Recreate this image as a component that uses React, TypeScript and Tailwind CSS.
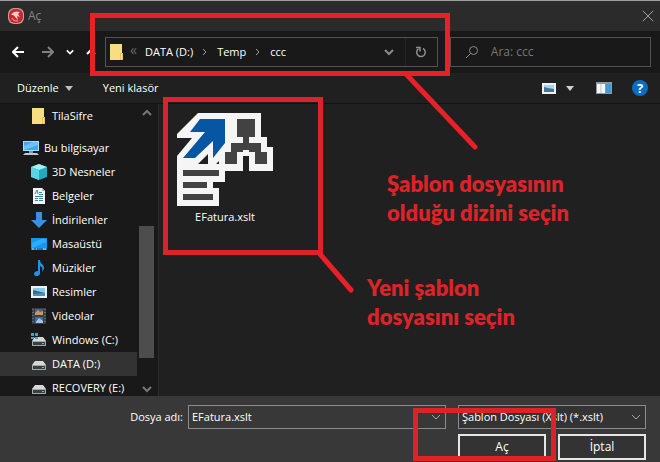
import type { ReactNode } from "react";

function Folder() {
  return (
    <svg width="16" height="18" viewBox="0 0 16 18" aria-hidden="true">
      <path d="M1 1h12v9h1v7H1z" fill="#f9dd82" />
      <path d="M11 10h3v7h-3z" fill="#e8c25c" />
      <path d="M12 11h1v5h-1z" fill="#fbe9ab" />
    </svg>
  );
}
function Pc() {
  return (
    <svg width="18" height="16" viewBox="0 0 18 16" aria-hidden="true">
      <path d="M1 1h16v10H1z" fill="#a9dcfa" />
      <path d="M2 2h14v8H2z" fill="#42a8ec" />
      <path d="M2 10V6l9-4h5v3z" fill="#6cc2f6" />
      <path d="M7 11h4v2H7z" fill="#7f9cae" />
      <path d="M3 13h12l2 2H1z" fill="#b9cbd6" />
    </svg>
  );
}
function Cube() {
  return (
    <svg width="16" height="16" viewBox="0 0 16 16" aria-hidden="true">
      <path d="M8 0l8 3v10l-8 3-8-3V3z" fill="#24a9c0" />
      <path d="M8 0l8 3-8 3-8-3z" fill="#a9edf5" />
      <path d="M0 3l8 3v10l-8-3z" fill="#5bd3e3" />
    </svg>
  );
}
function Doc() {
  return (
    <svg width="16" height="16" viewBox="0 0 16 16" aria-hidden="true">
      <path d="M2 0h9l3 3v13H2z" fill="#f1f4f6" />
      <path d="M11 0v3h3z" fill="#a8b6bf" />
      <path d="M4 6l2-4 1 4M8 4.500h3M8 6.500h4M4 8.500h8M4 10.500h3M4 12.500h3M8 10.500h4M8 12.500h4" stroke="#3c84a8" fill="none" />
    </svg>
  );
}
function Down() {
  return (
    <svg width="16" height="16" viewBox="0 0 16 16" aria-hidden="true">
      <path d="M5 0h6v8h5l-8 8-8-8h5z" fill="#3a8fe0" />
    </svg>
  );
}
function Desk() {
  return (
    <svg width="16" height="14" viewBox="0 0 16 14" aria-hidden="true">
      <path d="M0 1h16v12H0z" fill="#1397ee" />
      <path d="M1 11V6l9-4h5v3z" fill="#2badfa" />
      <path d="M0 11h16v2H0z" fill="#1279c6" />
      <path d="M1 12h2M5 12h1M12 12h3" stroke="#bfe5fc" />
    </svg>
  );
}
function Note() {
  return (
    <svg width="16" height="16" viewBox="0 0 16 16" aria-hidden="true">
      <path d="M7 0h2c0 4 4 4 4 8 0 1-1 3-2 4 1-4 0-5-2-6v7c0 4-6 4-6 1 0-2 2-3 4-3z" fill="#1e93e8" />
    </svg>
  );
}
function Pic() {
  return (
    <svg width="16" height="12" viewBox="0 0 16 12" aria-hidden="true">
      <path d="M0 0h16v12H0z" fill="#eef2f4" />
      <path d="M2 2h12v8H2z" fill="#8cc8e8" />
      <path d="M2 4l4 1 8 2v3H2z" fill="#2f6d87" />
      <path d="M2 8l12-1v3H2z" fill="#4b92b8" />
    </svg>
  );
}
function Film() {
  return (
    <svg width="14" height="16" viewBox="0 0 14 16" aria-hidden="true">
      <path d="M0 0h14v16H0z" fill="#3a3e43" />
      <path d="M3 1h8v6H3z" fill="#4a5e9a" />
      <path d="M3 9h8v6H3z" fill="#2e6fc0" />
      <path d="M3 5l3-3 2 2 3-1v4H3z" fill="#c79a5a" />
      <path d="M4 14l3-4 4 3v2H4z" fill="#a9c3df" />
      <path d="M1 1v15M13 1v15" stroke="#8f959b" strokeDasharray="1 2" />
    </svg>
  );
}
function Drive({ win = false }: { win?: boolean }) {
  return (
    <svg width="16" height="14" viewBox="0 0 16 14" aria-hidden="true">
      <path d="M4 4h8l3 4H1z" fill="#d5d8da" />
      <path d="M1 8h14v5H1z" fill="#a3a7aa" />
      <path d="M2 9h12v3H2z" fill="#3b3f41" />
      <path d="M11 10h2v1h-2z" fill="#46e07a" />
      {win && <path d="M0 0h3v3H0zM4 0h3v3H4zM0 4h3v2H0zM4 4h3v2H4z" fill="#29a9e8" />}
    </svg>
  );
}

const chevronPaths = { up: "M1 7l4-4 4 4", down: "M1 3l4 4 4-4", right: "M3 2l3 3-3 3" };

function Chevron({ d, className = "", w = 2 }: { d: "up" | "down" | "right"; className?: string; w?: number }) {
  return (
    <svg width="10" height="10" viewBox="0 0 10 10" className={className} aria-hidden="true">
      <path d={chevronPaths[d]} fill="none" stroke="currentColor" strokeWidth={w} />
    </svg>
  );
}

function XsltIcon() {
  return (
    <svg width="97" height="94" viewBox="0 0 97 94" aria-hidden="true">
      <path d="M21 0H84V24H90V34H96V58H72V43H66V58H48V69H36V75H42V93H0V43L15 25H0V21z" fill="#f5f5f5" />
      <path d="M23 6h25v24L36 45V28L18 45H6l22-26H13z" fill="#0756a3" />
      <path d="M31 41v10H21zM42 48v3h-3z" fill="#202020" />
      <path d="M60 6h18v18h-6v6h12v9h6v12H78V39h-6v-2h-6v2h-6v12H48V39h6v-9h12v-6h-6z" fill="#424242" />
      <path d="M6 57h36v6H6zM6 69h24v6H6zM6 81h30v6H6z" fill="#424242" />
    </svg>
  );
}

const places: { name: string; icon: ReactNode; selected?: boolean }[] = [
  { name: "3D Nesneler", icon: <Cube /> },
  { name: "Belgeler", icon: <Doc /> },
  { name: "İndirilenler", icon: <Down /> },
  { name: "Masaüstü", icon: <Desk /> },
  { name: "Müzikler", icon: <Note /> },
  { name: "Resimler", icon: <Pic /> },
  { name: "Videolar", icon: <Film /> },
  { name: "Windows (C:)", icon: <Drive win /> },
  { name: "DATA (D:)", icon: <Drive />, selected: true },
  { name: "RECOVERY (E:)", icon: <Drive /> },
];

function Place({ name, icon, selected }: { name: string; icon: ReactNode; selected?: boolean }) {
  return (
    <button className={`flex h-6 w-full shrink-0 items-center gap-1 pl-[30px] text-left whitespace-nowrap ${selected ? "bg-[#333333]" : ""}`}>
      <span className="flex w-[18px] justify-center">{icon}</span>
      {name}
    </button>
  );
}

export default function App() {
  return (
    <div className="relative flex min-h-screen flex-col overflow-hidden border-t border-[#9a9e9c] bg-[#202020] font-['Open_Sans','Noto_Sans',sans-serif] text-[11px] leading-4 text-white">
      <header className="flex h-[30px] items-center bg-[#2b2b2b] pr-1.5 pl-2">
        <svg width="16" height="16" viewBox="0 0 16 16" aria-hidden="true">
          <rect width="16" height="16" rx="6" fill="#c79a9a" />
          <rect x="1" y="1" width="14" height="14" rx="6" fill="#c8252d" />
          <path d="M3 7c2-4 6-4 9-3l-2 2 2 3-3-1 1 4-3-3c-1-2-2-2-4-2z" fill="#f0c9c9" />
          <path d="M4 10c1 3 4 3 6 3" stroke="#f0b5b5" fill="none" />
        </svg>
        <h1 className="ml-1 flex-1 text-[12px] text-[#858585]">Aç</h1>
        <button aria-label="Kapat" className="text-[#a0a0a0]">
          <svg width="12" height="12" viewBox="0 0 12 12"><path d="M1 1l10 10M11 1L1 11" stroke="currentColor" /></svg>
        </button>
      </header>

      <nav className="flex h-[42px] items-center bg-[#191919] pr-[9px] pl-3">
        <button aria-label="Geri">
          <svg width="12" height="12" viewBox="0 0 12 12"><path d="M12 6H1M6 1L1 6l5 5" fill="none" stroke="#fff" strokeWidth="2" /></svg>
        </button>
        <button aria-label="İleri" className="ml-[18px]">
          <svg width="12" height="12" viewBox="0 0 12 12"><path d="M0 6h11M6 1l5 5-5 5" fill="none" stroke="#808080" strokeWidth="2" /></svg>
        </button>
        <button aria-label="Son konumlar" className="ml-3"><Chevron d="down" className="w-2" /></button>
        <button aria-label="Yukarı" className="ml-[11px]"><Chevron d="up" className="w-3" /></button>
        <div className="ml-2 flex h-[30px] min-w-0 flex-[354] items-center border border-[#535353] pl-[3px]">
          <Folder />
          <span className="ml-[5px] -mt-1 text-[14px] text-[#686868]">«</span>
          <button className="ml-2 whitespace-nowrap">DATA (D:)</button>
          <Chevron d="right" className="mx-[7px] text-[#a0a0a0]" w={1} />
          <button>Temp</button>
          <Chevron d="right" className="mx-[7px] text-[#a0a0a0]" w={1} />
          <button>ccc</button>
          <button aria-label="Önceki konumlar" className="ml-auto mr-[11px] text-[#8a8a8a]"><Chevron d="down" /></button>
          <button aria-label="Yenile" className="flex h-full w-8 items-center justify-center border-l border-[#242424] text-[#909090]">
            <svg width="12" height="12" viewBox="0 0 12 12"><path d="M8 2.500a4.300 4.300 0 1 1-4.500 0.300M1 1.500h4v4" fill="none" stroke="currentColor" strokeWidth="1.500" /></svg>
          </button>
        </div>
        <label className="ml-3 flex h-[30px] min-w-0 flex-[200] items-center gap-3 border border-[#535353] pl-[14px]">
          <svg width="14" height="14" viewBox="0 0 14 14" aria-hidden="true" className="shrink-0"><path d="M6 8l-5 5" stroke="#8a8a8a" /><circle cx="8.500" cy="5.500" r="4" fill="none" stroke="#8a8a8a" /></svg>
          <input aria-label="Ara" placeholder="Ara: ccc" className="w-full min-w-0 bg-transparent text-[12px] outline-none placeholder:text-[#777777]" />
        </label>
      </nav>

      <div className="flex h-[31px] items-center border-b border-[#121212] bg-[#202020] pr-3 pl-[17px]">
        <button className="flex items-center gap-1.5">Düzenle
          <svg width="8" height="5" viewBox="0 0 8 5"><path d="M0 0h8L4 5z" fill="#bdbdbd" /></svg>
        </button>
        <button className="ml-[30px]">Yeni klasör</button>
        <button aria-label="Görünüm" className="ml-auto flex items-center gap-2.5">
          <svg width="14" height="11" viewBox="0 0 14 11"><path d="M0 0h14v11H0z" fill="#eef2f4" /><path d="M2 2h10v7H2z" fill="#a9d2ee" /><path d="M2 4l4 1 6 1v3H2z" fill="#46759b" /></svg>
          <svg width="8" height="5" viewBox="0 0 8 5"><path d="M0 0h8L4 5z" fill="#d0d0d0" /></svg>
        </button>
        <button aria-label="Önizleme bölmesi" className="ml-[22px]">
          <svg width="16" height="12" viewBox="0 0 16 12"><path d="M0 0h16v12H0z" fill="#8d9aa4" /><path d="M1 2h4v9H1zM5 2h4v9H5z" fill="#f5f8fa" /><path d="M10 2h5v9h-5z" fill="#3d9be0" /><path d="M5 2v9" stroke="#b8c4cc" /></svg>
        </button>
        <button aria-label="Yardım" className="ml-5 h-4 w-4 rounded-full bg-[#0a6cc4] text-center text-[13px] leading-4 font-bold text-white">?</button>
      </div>

      <main className="flex h-[292px] overflow-hidden">
        <aside className="flex w-[159px] shrink-0 border-r border-[#2b2b2b] bg-[#191919]">
          <div className="flex w-[137px] flex-col overflow-hidden">
            <Place name="TilaSifre" icon={<Folder />} />
            <button className="mt-2 flex h-6 shrink-0 items-center gap-1 pl-[22px] text-left"><Pc />Bu bilgisayar</button>
            {places.map((p) => <Place key={p.name} {...p} />)}
          </div>
          <div className="ml-0.5 flex w-[15px] flex-col items-center pt-1 pb-0.5 text-[#777777]">
            <Chevron d="up" />
            <div className="mt-[108px] w-full flex-1 bg-[#4d4d4d]" />
            <Chevron d="down" className="mt-[26px]" />
          </div>
        </aside>
        <section className="pt-[9px] pl-[17px]">
          <button className="flex w-[98px] flex-col items-center"><XsltIcon /><span className="mt-0.5">EFatura.xslt</span></button>
        </section>
      </main>

      <footer className="grow bg-[#383838] pt-[9px] pr-[14px]">
        <div className="flex items-center">
          <label htmlFor="file" className="w-[183px] text-right">Dosya adı:</label>
          <div className="ml-[5px] flex h-6 min-w-0 flex-1 items-center border border-[#8c8c8c] pr-1 pl-[3px]">
            <input id="file" defaultValue="EFatura.xslt" className="w-full min-w-0 bg-transparent outline-none" />
            <Chevron d="down" className="shrink-0 text-[#a5a5a5]" w={1} />
          </div>
          <div className="ml-3 flex h-6 w-[188px] items-center border border-[#8c8c8c] bg-[#333333] pr-1 pl-[3px]">
            <select aria-label="Dosya türü" className="w-full min-w-0 appearance-none bg-transparent outline-none"><option>Şablon Dosyası (Xslt) (*.xslt)</option></select>
            <Chevron d="down" className="shrink-0 text-[#a5a5a5]" w={1} />
          </div>
        </div>
        <div className="mt-[5px] flex justify-end gap-3">
          <button className="h-[26px] w-[88px] border-2 border-[#e6e6e6] bg-[#333333] text-[12px]">Aç</button>
          <button className="h-[26px] w-[88px] border-2 border-[#e6e6e6] bg-[#333333] text-[12px]">İptal</button>
        </div>
      </footer>

      <svg className="pointer-events-none absolute -top-px left-0" width="660" height="462" viewBox="0 0 660 462" fill="none" stroke="#dc2329" strokeWidth="5" aria-hidden="true">
        <path d="M165.500 99.500h155v153h-155zM415.500 410.500h138v48h-138z" />
        <path d="M92.500 15.500h355v58h-355z" stroke="#e82028" />
        <path d="M406 74l69 73M320 254l31 36" stroke="#e82028" strokeLinecap="round" />
      </svg>
      <p className="absolute top-[168px] left-[387px] font-['Lato',sans-serif] text-[22px] leading-[29px] font-extrabold text-[#dc2329]">Şablon dosyasının<br />olduğu dizini seçin</p>
      <p className="absolute top-[272px] left-[367px] font-['Lato',sans-serif] text-[22px] leading-[29px] font-extrabold text-[#dc2329]">Yeni şablon<br />dosyasını seçin</p>
    </div>
  );
}
